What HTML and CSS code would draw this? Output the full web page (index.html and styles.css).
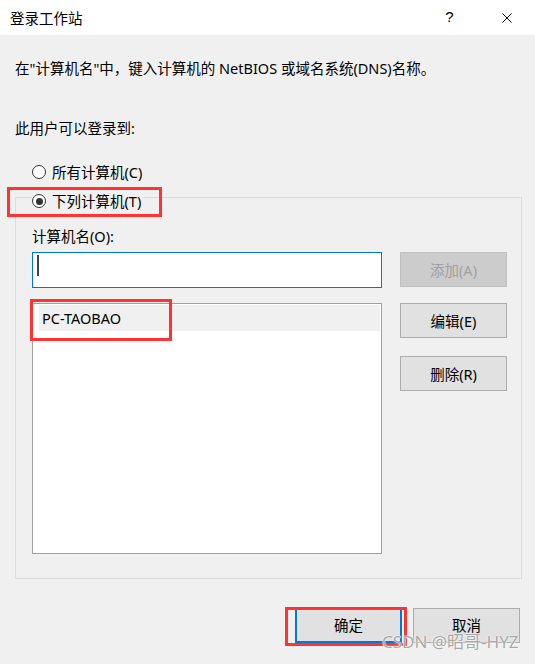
FILE: index.html
```html
<!DOCTYPE html>
<html lang="zh-CN">
<head>
<meta charset="utf-8">
<title>登录工作站</title>
<link rel="stylesheet" href="styles.css">
</head>
<body>
<div class="window">
  <div class="titlebar">
    <span class="title">登录工作站</span>
    <div class="tb-buttons">
      <span class="tb-btn help">?</span>
      <span class="tb-btn close">
        <svg width="10" height="10" viewBox="0 0 10 10"><path d="M0.5 0.5 L9.5 9.5 M9.5 0.5 L0.5 9.5" stroke="#000" stroke-width="1" fill="none"/></svg>
      </span>
    </div>
  </div>
  <div class="content">
    <p class="desc">在"计算机名"中，键入计算机的 NetBIOS 或域名系统(DNS)名称。</p>
    <p class="label-login">此用户可以登录到:</p>
    <div class="radio-row first">
      <span class="radio"></span><span>所有计算机(C)</span>
    </div>
    <fieldset class="group">
      <legend class="legend">
        <span class="radio-row inline"><span class="radio checked"></span><span>下列计算机(T)</span></span>
      </legend>
      <div class="field-label">计算机名(O):</div>
      <div class="row input-row">
        <div class="textbox"><span class="caret"></span></div>
        <div class="btn disabled">添加(A)</div>
      </div>
      <div class="row list-row">
        <div class="listbox">
          <div class="list-item">PC-TAOBAO</div>
        </div>
        <div class="side-buttons">
          <div class="btn">编辑(E)</div>
          <div class="btn">删除(R)</div>
        </div>
      </div>
    </fieldset>
    <div class="footer">
      <div class="btn default"><span class="btn-text">确定</span></div>
      <div class="btn"><span class="btn-text">取消</span></div>
    </div>
  </div>
  <div class="mark mark-radio"></div>
  <div class="mark mark-item"></div>
  <div class="mark mark-ok"></div>
  <div class="watermark">CSDN @昭哥-HYZ</div>
</div>
</body>
</html>
```

FILE: styles.css
```css
html, body {
  margin: 0;
  padding: 0;
  background: #f0f0f0;
}
.window {
  position: relative;
  width: 535px;
  height: 664px;
  overflow: hidden;
  background: #f0f0f0;
  font-family: "Noto Sans", "Noto Sans CJK SC", sans-serif;
  font-size: 14.5px;
  color: #000;
}
.titlebar {
  height: 35px;
  background: #fff;
  display: flex;
  align-items: center;
  padding-left: 10px;
}
.title {
  line-height: 20px;
}
.tb-buttons {
  margin-left: auto;
  display: flex;
  height: 35px;
}
.tb-btn {
  width: 57px;
  height: 35px;
  display: flex;
  align-items: center;
  justify-content: center;
}
.help {
  font-size: 15px;
  font-family: "Liberation Sans", sans-serif;
  padding-bottom: 2px;
  box-sizing: border-box;
}
.content {
  padding: 0 13px 0 15px;
}
.desc {
  margin: 23px 0 0 0;
  line-height: 20px;
  padding-left: 0;
}
.label-login {
  margin: 40px 0 0 0;
  line-height: 20px;
}
.radio-row {
  display: flex;
  align-items: center;
  line-height: 20px;
  height: 20px;
}
.radio-row.first {
  margin-top: 24px;
  padding-left: 17px;
}
.radio-row.inline {
  display: flex;
}
.radio {
  width: 12px;
  height: 12px;
  border: 1px solid #333;
  border-radius: 50%;
  background: #fff;
  margin-right: 6px;
  position: relative;
  display: inline-block;
  flex: none;
}
.radio.checked::after {
  content: "";
  position: absolute;
  left: 2.5px;
  top: 2.5px;
  width: 7px;
  height: 7px;
  border-radius: 50%;
  background: #333;
}
.group {
  margin: 1px 0 0 0;
  padding: 0 14px 24px 16px;
  border: 1px solid #dcdcdc;
  min-width: 0;
}
.legend {
  padding: 8px 2px 0 0;
  line-height: 20px;
}
.field-label {
  margin-top: 15px;
  line-height: 20px;
}
.row {
  display: flex;
  gap: 18px;
  align-items: flex-start;
}
.input-row {
  margin-top: 6px;
}
.textbox {
  width: 350px;
  height: 36px;
  box-sizing: border-box;
  border: 1px solid #0078d7;
  background: #fff;
  padding: 2px 0 0 4px;
}
.caret {
  display: block;
  width: 2px;
  height: 21px;
  background: #444;
}
.btn {
  width: 107px;
  height: 35px;
  box-sizing: border-box;
  border: 1px solid #adadad;
  background: #e1e1e1;
  display: flex;
  align-items: center;
  justify-content: center;
  line-height: 20px;
}
.btn-text {
  line-height: 15px;
}
.btn.disabled {
  background: #cccccc;
  border-color: #bfbfbf;
  color: #a0a0a0;
}
.btn.default {
  border: 2px solid #0078d7;
}
.list-row {
  margin-top: 15px;
}
.listbox {
  width: 350px;
  height: 251px;
  box-sizing: border-box;
  border: 1px solid #a0a0a0;
  background: #fff;
  padding: 1px 1px 0 6px;
}
.list-item {
  height: 26px;
  line-height: 26px;
  background: #f0f0f0;
  padding-left: 3px;
}
.side-buttons {
  display: flex;
  flex-direction: column;
  gap: 18px;
}
.footer {
  display: flex;
  justify-content: flex-end;
  gap: 11px;
  margin-top: 29px;
  padding-right: 2px;
}
.mark {
  position: absolute;
  border: 3px solid #f33;
  box-sizing: border-box;
}
.mark-radio {
  left: 7px;
  top: 187px;
  width: 155px;
  height: 30px;
}
.mark-item {
  left: 30px;
  top: 299px;
  width: 142px;
  height: 42px;
}
.mark-ok {
  left: 285px;
  top: 607px;
  width: 122px;
  height: 39px;
}
.watermark {
  position: absolute;
  left: 382px;
  top: 633px;
  font-size: 17px;
  line-height: 17px;
  color: #a8a8a8;
  text-shadow: 0 0 1px #fff, 0 0 2px #fff;
  white-space: nowrap;
}
```
